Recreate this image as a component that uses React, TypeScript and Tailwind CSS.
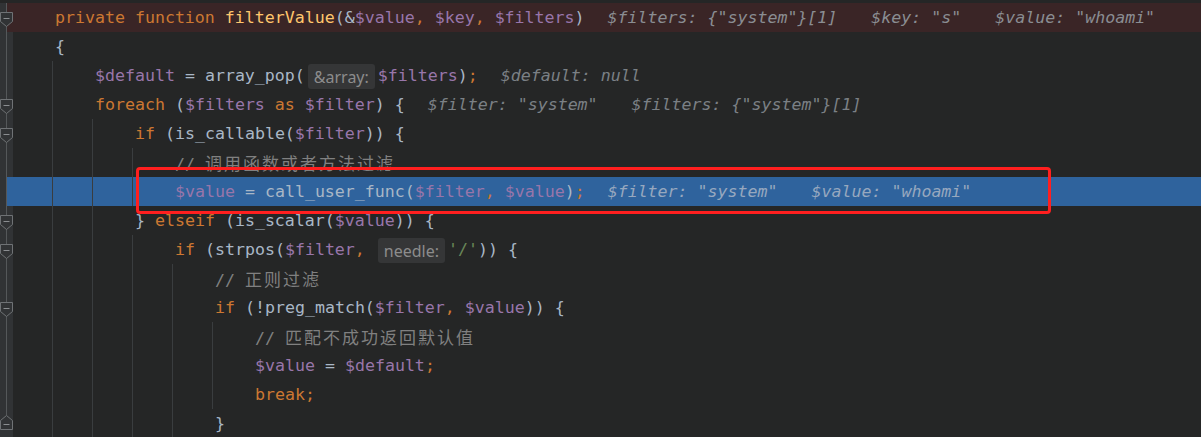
import React from "react";

const MONO = '"DejaVu Sans Mono", "Liberation Mono", monospace';
const CJK = '"Noto Sans CJK SC", "Noto Sans", sans-serif';

const K = ({ children }: { children: React.ReactNode }) => <span className="text-[#cc7832]">{children}</span>;
const F = ({ children }: { children: React.ReactNode }) => <span className="text-[#ffc66d]">{children}</span>;
const V = ({ children }: { children: React.ReactNode }) => <span className="text-[#9876aa]">{children}</span>;
const T = ({ children }: { children: React.ReactNode }) => <span className="text-[#a9b7c6]">{children}</span>;
const S = ({ children }: { children: React.ReactNode }) => <span className="text-[#6a8759]">{children}</span>;

const C = ({ cjk }: { cjk: string }) => (
  <span className="text-[#808080]">
    {"// "}
    <span className="text-[17px] tracking-[2px]" style={{ fontFamily: CJK }}>
      {cjk}
    </span>
  </span>
);

const Hint = ({ children }: { children: React.ReactNode }) => (
  <span
    className="mx-[3px] inline-flex h-[25px] items-center rounded-[3px] bg-[#353637] px-[6px] text-[16px] text-[#8c8c8c]"
    style={{ fontFamily: '"Noto Sans", "Open Sans", sans-serif' }}
  >
    {children}
  </span>
);

const Dbg = ({ children, first, tone }: { children: React.ReactNode; first?: boolean; tone: string }) => (
  <span className={`${first ? "ml-[23px]" : "ml-[34px]"} italic ${tone}`}>{children}</span>
);

type Marker = "none" | "start" | "end";

function Gutter({ marker, hl }: { marker: Marker; hl: boolean }) {
  return (
    <div className="relative flex h-full w-[13px] shrink-0">
      <div className="h-full w-[7px] bg-[#313335]" />
      <div className={`h-full w-[6px] ${hl ? "" : "bg-[#313335]"}`} />
      {marker !== "end" && <div className="absolute left-[6px] top-0 h-full w-px bg-[#55585a]" />}
      {marker === "end" && <div className="absolute left-[6px] top-0 h-[6px] w-px bg-[#55585a]" />}
      {marker === "start" && (
        <svg className="absolute left-0 top-[9px]" width="13" height="15" viewBox="0 0 13 15">
          <path d="M0.5 0.5 H12.5 V9.5 L6.5 14.5 L0.5 9.5 Z" fill="#313335" stroke="#6f7275" />
          <path d="M3.5 6.5 H9.5" stroke="#8a8d90" />
        </svg>
      )}
      {marker === "end" && (
        <svg className="absolute left-0 top-[6px]" width="13" height="15" viewBox="0 0 13 15">
          <path d="M0.5 14.5 H12.5 V5.5 L6.5 0.5 L0.5 5.5 Z" fill="#313335" stroke="#6f7275" />
          <path d="M3.5 9.5 H9.5" stroke="#8a8d90" />
        </svg>
      )}
    </div>
  );
}

function Line({
  indent,
  marker = "none",
  bg = "",
  hl = false,
  children,
}: {
  indent: number;
  marker?: Marker;
  bg?: string;
  hl?: boolean;
  children: React.ReactNode;
}) {
  return (
    <div className={`flex h-[29px] w-full items-center ${bg}`}>
      <Gutter marker={marker} hl={hl} />
      <div className="flex h-full shrink-0 pl-[39px]">
        {Array.from({ length: indent }).map((_, i) => (
          <div key={i} className="h-full w-[40px] shrink-0 border-l border-[#3a3d3f]" />
        ))}
      </div>
      <div className="flex translate-y-[1px] items-center whitespace-pre pl-[3px]">{children}</div>
    </div>
  );
}

export default function App() {
  const dn = "text-[#7b8085]";
  const dr = "text-[#8a8d92]";
  const db = "text-[#97a8bf]";
  return (
    <div
      className="relative h-[437px] w-[1201px] overflow-hidden bg-[#252626] pt-[3px] text-[16.6px] text-[#a9b7c6]"
      style={{ fontFamily: MONO }}
    >
      <Line indent={0} marker="start" bg="bg-[#3a2526]" hl>
        <K>private function </K>
        <F>filterValue</F>
        <T>(&amp;</T>
        <V>$value</V>
        <K>, </K>
        <V>$key</V>
        <K>, </K>
        <V>$filters</V>
        <T>)</T>
        <Dbg first tone={dr}>$filters: {'{"system"}[1]'}</Dbg>
        <Dbg tone={dr}>$key: "s"</Dbg>
        <Dbg tone={dr}>$value: "whoami"</Dbg>
      </Line>
      <Line indent={0}>
        <T>{"{"}</T>
      </Line>
      <Line indent={1}>
        <V>$default</V>
        <T> = array_pop(</T>
        <Hint>&amp;array:</Hint>
        <V>$filters</V>
        <T>)</T>
        <K>;</K>
        <Dbg first tone={dn}>$default: null</Dbg>
      </Line>
      <Line indent={1} marker="start">
        <K>foreach </K>
        <T>(</T>
        <V>$filters</V>
        <K> as </K>
        <V>$filter</V>
        <T>) {"{"}</T>
        <Dbg first tone={dn}>$filter: "system"</Dbg>
        <Dbg tone={dn}>$filters: {'{"system"}[1]'}</Dbg>
      </Line>
      <Line indent={2} marker="start">
        <K>if </K>
        <T>(is_callable(</T>
        <V>$filter</V>
        <T>)) {"{"}</T>
      </Line>
      <Line indent={3}>
        <C cjk="调用函数或者方法过滤" />
      </Line>
      <Line indent={3} bg="bg-[#2f639d]" hl>
        <V>$value</V>
        <T> = call_user_func(</T>
        <V>$filter</V>
        <K>, </K>
        <V>$value</V>
        <T>)</T>
        <K>;</K>
        <Dbg first tone={db}>$filter: "system"</Dbg>
        <Dbg tone={db}>$value: "whoami"</Dbg>
      </Line>
      <Line indent={2} marker="start">
        <T>{"} "}</T>
        <K>elseif </K>
        <T>(is_scalar(</T>
        <V>$value</V>
        <T>)) {"{"}</T>
      </Line>
      <Line indent={3} marker="start">
        <K>if </K>
        <T>(strpos(</T>
        <V>$filter</V>
        <K>, </K>
        <Hint>needle:</Hint>
        <S>'/'</S>
        <T>)) {"{"}</T>
      </Line>
      <Line indent={4}>
        <C cjk="正则过滤" />
      </Line>
      <Line indent={4} marker="start">
        <K>if </K>
        <T>(!preg_match(</T>
        <V>$filter</V>
        <K>, </K>
        <V>$value</V>
        <T>)) {"{"}</T>
      </Line>
      <Line indent={5}>
        <C cjk="匹配不成功返回默认值" />
      </Line>
      <Line indent={5}>
        <V>$value</V>
        <T> = </T>
        <V>$default</V>
        <K>;</K>
      </Line>
      <Line indent={5}>
        <K>break;</K>
      </Line>
      <Line indent={4} marker="end">
        <T>{"}"}</T>
      </Line>

      <div className="pointer-events-none absolute left-[136px] top-[167px] h-[47px] w-[915px] rounded-[4px] border-[3px] border-[#ff1f1f]" />
    </div>
  );
}
